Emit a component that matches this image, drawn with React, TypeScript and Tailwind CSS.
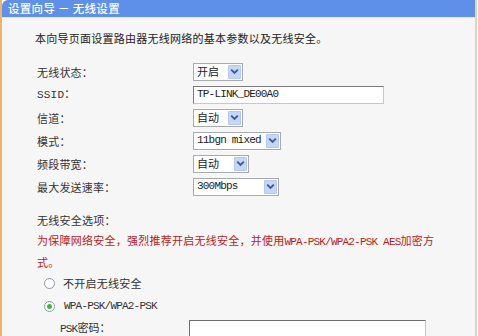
import React from 'react';

const cjk = "font-['Noto_Sans_CJK_SC','Noto_Sans',sans-serif]";
const mono = "font-['Liberation_Mono',monospace] tracking-[-0.8px]";

function Chevron() {
  return (
    <svg width="9" height="7" viewBox="0 0 9 7">
      <path d="M1.2 1.6 L4.5 4.9 L7.8 1.6" fill="none" stroke="#3c5a9a" strokeWidth="1.9" />
    </svg>
  );
}

function Select({ value, w, isMono }: { value: string; w: string; isMono?: boolean }) {
  return (
    <div className={`${w} h-[18px] flex items-center justify-between bg-white border border-[#a7abb0] pl-[3px] pr-[1px]`}>
      <span className={`${isMono ? mono : cjk} text-[11px] text-[#222] leading-none`}>{value}</span>
      <div className="w-[13px] h-[14px] flex items-center justify-center bg-[#c6d6f8] border border-[#b7c8ee] rounded-[1px]">
        <Chevron />
      </div>
    </div>
  );
}

function Row({ label, children, isMono }: { label: string; children: React.ReactNode; isMono?: boolean }) {
  return (
    <div className="flex items-center h-[23px]">
      <div className={`w-[156px] text-[11px] tracking-[0.2px] text-[#333] ${isMono ? "font-['Liberation_Mono','Noto_Sans_CJK_SC',monospace]" : cjk}`}>{label}</div>
      {children}
    </div>
  );
}

function Radio({ checked }: { checked?: boolean }) {
  return (
    <div className="w-[11px] h-[11px] rounded-full border border-[#8c98a6] bg-white flex items-center justify-center">
      {checked ? <div className="w-[5px] h-[5px] rounded-full bg-[#3fb83a]" /> : null}
    </div>
  );
}

export default function App() {
  return (
    <div className="w-[478px] h-[336px] overflow-hidden bg-white">
      <div className="w-[477px] h-full border-l-2 border-l-[#f2b26a] border-r-2 border-r-[#e3d3b0] flex flex-col">
        <div className="h-[22px] bg-[#5e90ea] rounded-tl-[6px] flex items-center pl-[6px]">
          <span className={`${cjk} text-[11.5px] font-medium text-white tracking-[0.3px]`}>设置向导 － 无线设置</span>
        </div>
        <div className="flex-1 bg-[#f6f6f6] border-t border-t-[#dfe6f2]">
          <p className={`${cjk} text-[11px] tracking-[0.25px] text-[#222] leading-[20px] pl-[33px] pt-[10px]`}>
            本向导页面设置路由器无线网络的基本参数以及无线安全。
          </p>
          <div className="pl-[35px] pt-[12px]">
            <Row label="无线状态：">
              <Select value="开启" w="w-[50px]" />
            </Row>
            <Row label="SSID：" isMono>
              <div className="w-[191px] h-[18px] bg-white border border-[#7b7b7b] border-r-[#c8c8c8] border-b-[#c8c8c8] flex items-center pl-[3px]">
                <span className={`${mono} text-[11px] text-[#222] leading-none`}>TP-LINK_DE00A0</span>
              </div>
            </Row>
            <Row label="信道：">
              <Select value="自动" w="w-[50px]" />
            </Row>
            <Row label="模式：">
              <Select value="11bgn mixed" w="w-[88px]" isMono />
            </Row>
            <Row label="频段带宽：">
              <Select value="自动" w="w-[56px]" />
            </Row>
            <Row label="最大发送速率：">
              <Select value="300Mbps" w="w-[86px]" isMono />
            </Row>
          </div>
          <div className={`${cjk} text-[11px] tracking-[0.25px] leading-[20px] pl-[35px] pt-[12px]`}>
            <div className="text-[#333]">无线安全选项：</div>
            <div className="text-[#b81c1c]">
              为保障网络安全，强烈推荐开启无线安全，并使用<span className={mono}>WPA-PSK/WPA2-PSK AES</span>加密方
              <br />
              式。
            </div>
          </div>
          <div className="pl-[42px]">
            <div className="flex items-center h-[22px] gap-[8px]">
              <Radio />
              <span className={`${cjk} text-[11px] tracking-[0.25px] text-[#333]`}>不开启无线安全</span>
            </div>
            <div className="flex items-center h-[24px] gap-[9px]">
              <Radio checked />
              <span className={`${mono} text-[11px] text-[#333]`}>WPA-PSK/WPA2-PSK</span>
            </div>
          </div>
          <div className="flex items-start pl-[58px]">
            <div className={`w-[129px] text-[11px] text-[#333] leading-[18px] ${cjk}`}>
              <span className={mono}>PSK</span>密码：
            </div>
            <div className="w-[237px] h-[20px] mt-[2px] bg-white border border-[#6d6d6d] border-r-[#c8c8c8] border-b-[#c8c8c8]" />
          </div>
        </div>
      </div>
    </div>
  );
}
